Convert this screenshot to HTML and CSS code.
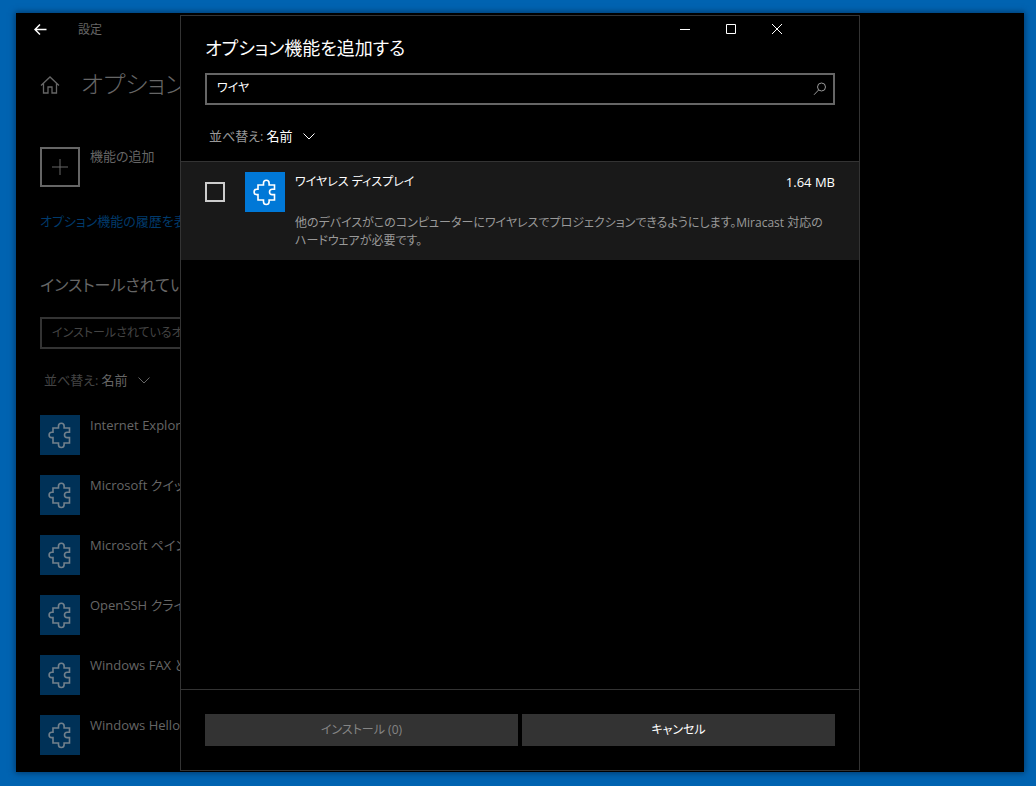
FILE: index.html
```html
<!DOCTYPE html>
<html lang="ja">
<head>
<meta charset="utf-8">
<meta name="viewport" content="width=device-width, initial-scale=1">
<title>設定</title>
<link rel="stylesheet" href="styles.css">
</head>
<body>
<svg class="sprite" aria-hidden="true">
  <symbol id="puzzle" viewBox="0 0 40 40">
    <path d="M13 13h5.500v-2a2.800 2.800 0 0 1 5.600 0v2h5.400v4.200h-2.300a2.700 2.700 0 0 0 0 5.400h2.300v5.400h-5.400v1.700a2.800 2.800 0 0 1-5.600 0v-1.700H13v-5.400h-1.200a2.700 2.700 0 0 1 0-5.400H13z"/>
  </symbol>
  <symbol id="chevron" viewBox="0 0 14 8">
    <path d="M1.500 1.500l5.500 5.500 5.500-5.500"/>
  </symbol>
</svg>
<div class="window">
  <main class="page">
    <header class="titlebar">
      <button class="back" type="button" aria-label="戻る">
        <svg width="14" height="12" viewBox="0 0 14 12"><path d="M12.500 5.500H1M6 .5l-5 5 5 5"/></svg>
      </button>
      <span class="app-name">設定</span>
    </header>
    <div class="heading">
      <svg class="home" width="20" height="20" viewBox="0 0 20 20"><path d="M1 11.500L10 3l9 8.500M3.500 9.500V19H8v-6h4v6h4.500V9.500"/></svg>
      <h1>オプション機能</h1>
    </div>
    <button class="add" type="button">
      <span class="add-box"><svg width="16" height="16" viewBox="0 0 16 16"><path d="M8 0v16M0 8h16"/></svg></span>
      <span>機能の追加</span>
    </button>
    <a class="history" href="#">オプション機能の履歴を表示</a>
    <h2>インストールされているオプション機能</h2>
    <input class="installed-search" type="text" aria-label="インストールされているオプション機能の検索" placeholder="インストールされているオプション機能の検索">
    <button class="sort" type="button"><span class="sort-label">並べ替え:</span> 名前 <svg width="14" height="8"><use href="#chevron"/></svg></button>
    <ul class="features">
      <li><svg class="tile"><use href="#puzzle"/></svg><span>Internet Explorer 11</span></li>
      <li><svg class="tile"><use href="#puzzle"/></svg><span>Microsoft クイック アシスト</span></li>
      <li><svg class="tile"><use href="#puzzle"/></svg><span>Microsoft ペイント</span></li>
      <li><svg class="tile"><use href="#puzzle"/></svg><span>OpenSSH クライアント</span></li>
      <li><svg class="tile"><use href="#puzzle"/></svg><span>Windows FAX とスキャン</span></li>
      <li><svg class="tile"><use href="#puzzle"/></svg><span>Windows Hello 顔認証</span></li>
    </ul>
  </main>
  <section class="dialog" role="dialog" aria-labelledby="dialog-title">
    <div class="controls">
      <button type="button" aria-label="最小化"><svg width="10" height="10" viewBox="0 0 10 10"><path d="M0 5.500h10"/></svg></button>
      <button type="button" aria-label="最大化"><svg width="10" height="10" viewBox="0 0 10 10"><path d="M.5.5h9v9h-9z"/></svg></button>
      <button type="button" aria-label="閉じる"><svg width="10" height="10" viewBox="0 0 10 10"><path d="M0 0l10 10M10 0L0 10"/></svg></button>
    </div>
    <h2 class="dialog-title" id="dialog-title">オプション機能を追加する</h2>
    <div class="search">
      <input type="text" value="ワイヤ" aria-label="利用可能なオプション機能の検索">
      <svg width="14" height="14" viewBox="0 0 14 14"><circle cx="8.500" cy="5" r="4"/><path d="M5.700 7.900L1 12.800"/></svg>
    </div>
    <button class="sort" type="button"><span class="sort-label">並べ替え:</span> 名前 <svg width="14" height="8"><use href="#chevron"/></svg></button>
    <div class="results">
      <label class="result">
        <input type="checkbox">
        <svg class="tile"><use href="#puzzle"/></svg>
        <span class="info">
          <span class="name-row"><span class="name">ワイヤレス ディスプレイ</span><span>1.64 MB</span></span>
          <span class="description">他のデバイスがこのコンピューターにワイヤレスでプロジェクションできるようにします。Miracast 対応のハードウェアが必要です。</span>
        </span>
      </label>
    </div>
    <footer class="actions">
      <button type="button" disabled>インストール (0)</button>
      <button type="button">キャンセル</button>
    </footer>
  </section>
</div>
</body>
</html>
```
FILE: styles.css
```css
* { box-sizing: border-box; }

body {
  margin: 0;
  min-height: 100vh;
  display: flex;
  padding: 13px 12px 14px 16px;
  background: #0063b1;
  color: #fff;
  font: 13px/18px "Open Sans", "Noto Sans CJK JP", sans-serif;
  font-feature-settings: "palt";
}

h1, h2, ul { margin: 0; padding: 0; font-weight: 400; }
button, input { font: inherit; font-feature-settings: inherit; color: inherit; }
button { border: 0; padding: 0; background: none; }
svg { fill: none; stroke: currentColor; flex: none; }
.sprite { position: absolute; width: 0; height: 0; }

.window {
  position: relative;
  flex: 1;
  background: #000;
  box-shadow: 0 0 6px 1px #003a6b;
}

.page {
  display: flex;
  flex-direction: column;
  align-items: flex-start;
  padding: 0 24px;
  color: #666;
  white-space: nowrap;
}

.titlebar { display: flex; align-items: center; gap: 30px; height: 34px; }
.back { display: flex; width: 14px; margin-left: -6px; color: #fff; }
.back svg { stroke-width: 1.5; }
.app-name { font-size: 12px; }

.heading { display: flex; align-items: center; gap: 21px; height: 40px; margin-top: 17px; }
.heading h1 { font-size: 24px; line-height: 40px; font-weight: 300; }
.home { stroke-width: 1.3; }

.add { display: flex; align-items: flex-start; gap: 10px; margin-top: 43px; }
.add-box {
  display: flex;
  align-items: center;
  justify-content: center;
  width: 40px;
  height: 40px;
  border: 2px solid #666;
}

.history { margin-top: 25px; color: #003a6b; text-decoration: none; }
.page h2 { margin-top: 41px; font-size: 16px; line-height: 28px; }

.installed-search {
  width: 400px;
  height: 32px;
  margin-top: 18px;
  padding: 0 10px 2px;
  border: 2px solid #333;
  background: #000;
  font-size: 12px;
}
.installed-search::placeholder { color: #444; opacity: 1; }

.sort { display: flex; align-items: center; gap: 3px; margin: 22px 0 0 4px; }
.sort svg { margin-left: 7px; }
.sort-label { color: #999; }
.page .sort-label { color: #444; }

.features { display: grid; gap: 20px; margin-top: 26px; list-style: none; }
.features li { display: flex; gap: 10px; height: 40px; }
.features span { padding-top: 1px; }
.tile { width: 40px; height: 40px; background: #0078d7; stroke-width: 1.6; }
.page .tile { background: #003157; color: #71808c; }

.dialog {
  position: absolute;
  top: 2px;
  bottom: 1px;
  left: 50%;
  width: 680px;
  max-width: 100%;
  margin-left: -340px;
  display: flex;
  flex-direction: column;
  border: 1px solid #333;
  background: #000;
}

.controls { display: flex; justify-content: flex-end; padding-right: 59px; }
.controls button { display: flex; align-items: center; justify-content: center; width: 46px; height: 26px; }

.dialog-title { padding: 0 24px; margin-top: -8px; font-size: 18px; line-height: 28px; }

.search {
  display: flex;
  align-items: center;
  height: 32px;
  margin: 11px 24px 0;
  padding: 0 6px 0 10px;
  border: 2px solid #666;
}
.search input { flex: 1; border: 0; padding: 0 0 2px; background: none; outline: none; font-size: 12px; }
.search svg { color: #999; }
.dialog .sort { margin: 22px 0 0 28px; }

.results { flex: 1; margin-top: 16px; border-top: 1px solid #333; }
.result { display: flex; gap: 10px; padding: 10px 24px; background: #191919; }
.result input {
  appearance: none;
  width: 20px;
  height: 20px;
  margin: 10px 10px 0 0;
  border: 2px solid #ccc;
}
.info { flex: 1; }
.name-row { display: flex; justify-content: space-between; padding-top: 1px; }
.name { font-size: 12px; }
.description { display: block; margin-top: 23px; padding-right: 6px; color: #999; font-size: 12px; }

.actions { display: flex; gap: 4px; padding: 24px; border-top: 1px solid #333; }
.actions button { flex: 1; height: 32px; background: #333; font-size: 12px; }
.actions button:disabled { color: #858585; }
```
